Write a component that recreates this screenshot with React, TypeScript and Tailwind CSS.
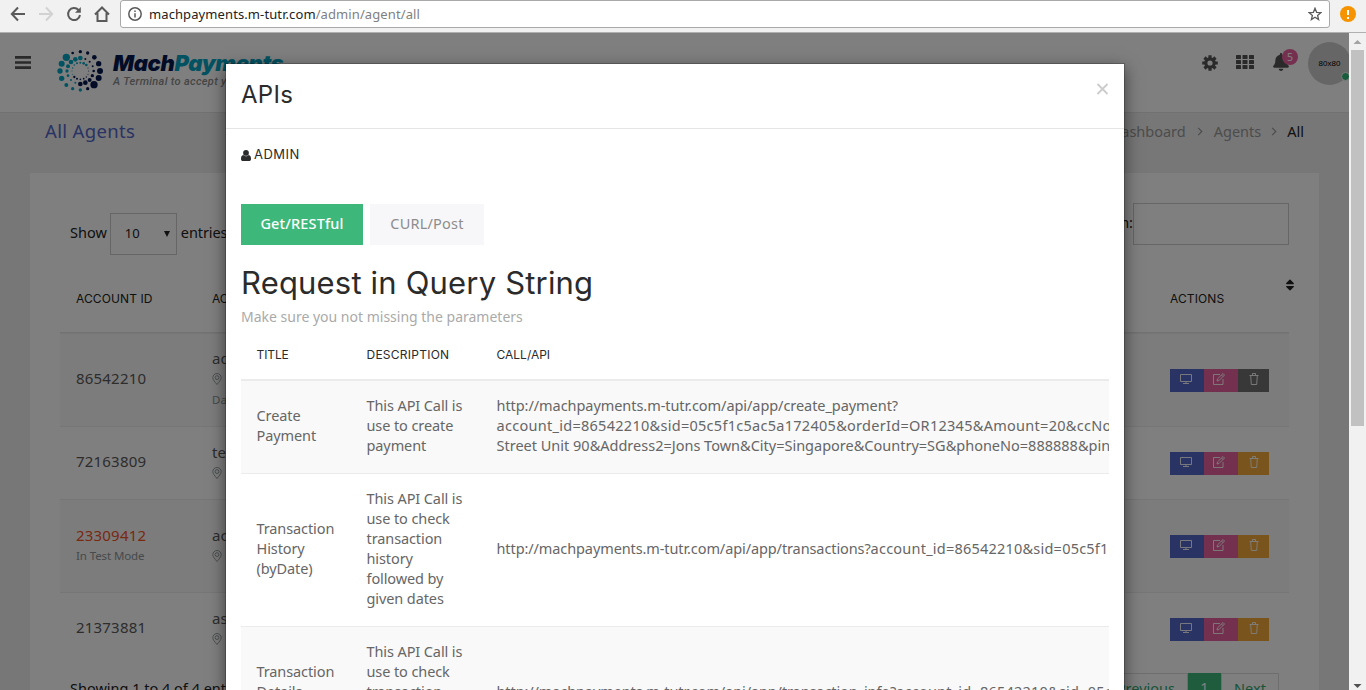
import React from "react";
import { FaBell, FaSort } from "react-icons/fa";

type Dot = [number, number, number, string];
const N = "#04194f";
const T = "#05a5c4";
const outer: Dot[] = [
  [85, 20, 5, N], [107, 24, 5, N], [127, 37, 7, N], [140, 56, 8, N], [144, 78, 9, N], [140, 99, 9, N], [126, 119, 11, N], [107, 131, 5, N],
  [85, 135, 5, T], [62, 131, 5, T], [43, 120, 6, T], [29, 100, 8, T], [24, 78, 8, T], [29, 56, 9, T], [43, 37, 11, T], [62, 24, 4, N],
];
const middle: Dot[] = [
  [85, 39, 7, T], [100, 42, 3, N], [113, 50, 3, N], [122, 64, 3, N], [125, 78, 4, N], [121, 92, 5, N], [113, 105, 6, N], [100, 113, 7, N],
  [85, 117, 7, N], [70, 113, 3, T], [57, 105, 3, T], [48, 92, 4, T], [45, 78, 5, T], [48, 64, 6, T], [57, 51, 7, T], [70, 43, 7, T],
];
const inner: Dot[] = [
  [85, 53, 3, T], [95, 55, 4, T], [103, 60, 4, T], [108, 69, 1.5, N], [110, 78, 1.5, N], [108, 88, 1.5, N], [103, 96, 2, N], [95, 101, 2.5, N],
  [85, 103, 2.5, N], [75, 101, 3, N], [67, 96, 3.5, N], [62, 88, 1.5, T], [60, 78, 1.5, T], [62, 69, 2, T], [67, 60, 2.5, T], [75, 55, 3, T],
];

function Logo() {
  return (
    <svg viewBox="0 0 180 150" className="h-[50px] w-[60px] shrink-0">
      {[...outer, ...middle, ...inner].map(([x, y, r, c], i) => (
        <circle key={i} cx={x} cy={y} r={r} fill={c} />
      ))}
    </svg>
  );
}

const Monitor = () => (
  <svg viewBox="0 0 12 12" className="size-3" fill="none" stroke="currentColor">
    <path d="M.5 1.5h11v7H.5zM6 8.500v2M3 10.500h6" />
  </svg>
);
const Edit = () => (
  <svg viewBox="0 0 12 12" className="size-3" fill="none" stroke="currentColor">
    <path d="M7 1.500H.5v10h9.500V6M4 8l.6-2.200L10 .5l1.500 1.500L6.200 7.400zM8.500 2l1.500 1.500" />
  </svg>
);
const Trash = () => (
  <svg viewBox="0 0 12 12" className="size-3" fill="none" stroke="currentColor">
    <path d="M1.500 2.500h9M4.500 2.500v-2h3v2M2.700 2.500l.6 9h5.400l.6-9" />
  </svg>
);
const Pin = () => (
  <svg viewBox="0 0 10 12" className="h-3 w-[10px] text-[#8d9498]" fill="none" stroke="currentColor" strokeWidth=".9">
    <path d="M5 11.500C3 9 .8 6.800.8 4.700a4.200 4.200 0 0 1 8.400 0C9.200 6.800 7 9 5 11.500z" />
    <circle cx="5" cy="4.600" r="1.900" />
  </svg>
);
const Chevron = () => (
  <svg viewBox="0 0 6 10" className="mt-[7px] h-[9px] w-1.5" fill="none" stroke="currentColor" strokeWidth="1.300">
    <path d="M1 1l4 4-4 4" />
  </svg>
);
const Gear = () => (
  <svg viewBox="0 0 16 16" className="mt-[22px] size-4" fill="none" stroke="currentColor">
    <circle cx="8" cy="8" r="4.200" strokeWidth="3.200" />
    <path d="M8 .2v3M8 12.800v3M.2 8h3M12.800 8h3M2.500 2.500l2 2M11.500 11.500l2 2M2.500 13.500l2-2M11.500 4.500l2-2" strokeWidth="3.200" />
  </svg>
);
const Bars = () => (
  <svg viewBox="0 0 16 13" className="mt-[23px] ml-[15px] h-[13px] w-4" fill="currentColor">
    <path d="M0 0h16v2.700H0zM0 5.200h16v2.600H0zM0 10.300h16V13H0z" />
  </svg>
);
const Grid = () => (
  <svg viewBox="0 0 18 14" className="mt-[22px] ml-[18px] h-[14px] w-[18px]" fill="currentColor">
    {[0, 6.5, 13].map((x) => [0, 5, 10].map((y) => <rect key={`${x}-${y}`} x={x} y={y} width="5" height="4" rx=".6" />))}
  </svg>
);
const Person = () => (
  <svg viewBox="0 0 10 11" className="h-[11px] w-[10px]" fill="currentColor">
    <circle cx="5" cy="2.900" r="2.900" />
    <path d="M2.300 5C.6 5.300 0 7 0 8.900 0 10.200.8 11 2 11h6c1.200 0 2-.8 2-2.100C10 7 9.400 5.300 7.700 5 6.200 6.800 3.800 6.800 2.300 5z" />
  </svg>
);

function BrowserBar() {
  return (
    <div className="flex h-[33px] shrink-0 items-start border-b border-[#b0b0b0] bg-[#f1f1f1] text-[#5a5a5a]">
      <svg viewBox="0 0 120 28" className="h-7 w-[120px] shrink-0" fill="none" stroke="currentColor" strokeWidth="2">
        <path d="M25 14H12.500M18 7.500 11.800 14l6.200 6.500" />
        <path d="M39 14h12.500M46 7.500l6.200 6.500-6.200 6.500" stroke="#d2d2d2" />
        <path d="M78.500 10A6 6 0 1 0 80 15" />
        <path d="M80.800 7v5.800H75z" fill="currentColor" stroke="none" />
        <path d="M95 14.500 102 7.500l7 7M97.500 13v8h9v-8" />
      </svg>
      <div className="flex h-7 w-[1210px] items-center rounded-[3px] border border-[#a9a9a9] bg-white pr-[7px] pl-[7px]">
        <svg viewBox="0 0 14 14" className="size-[14px]" fill="none" stroke="currentColor" strokeWidth="1.500">
          <circle cx="7" cy="7" r="6.200" />
          <path d="M7 6.200v4.300M7 3.500v1.500" />
        </svg>
        <span className="ml-[7px] font-['Noto_Sans',sans-serif] text-[13px] leading-5 tracking-[.1px] text-[#222]">
          machpayments.m-tutr.com<span className="text-[#808080]">/admin/agent/all</span>
        </span>
        <svg viewBox="0 0 14 14" className="ml-auto size-[14px]" fill="none" stroke="currentColor" strokeWidth="1.300">
          <path d="M7 1.300l1.600 4 4.300.3-3.300 2.800 1 4.200L7 10.300l-3.600 2.300 1-4.200L1.100 5.600l4.300-.3z" />
        </svg>
      </div>
      <div className="mt-1.5 ml-[10px] flex size-4 flex-col items-center justify-center gap-0.5 rounded-full bg-[#f59300]">
        <span className="h-[5px] w-0.5 bg-white" />
        <span className="h-0.5 w-0.5 bg-white" />
      </div>
    </div>
  );
}

function TopNav() {
  return (
    <header className="flex h-20 shrink-0 items-start border-b border-[#e2e2e2] bg-white text-[#555]">
      <Bars />
      <div className="mt-3 ml-[21px]">
        <Logo />
      </div>
      <div className="mt-[16px] ml-px">
        <div className="font-['Inter',sans-serif] text-[22px] leading-[28px] font-black tracking-[-.35px] text-[#04194f] italic">
          Mach<span className="text-[#05a5c4]">Payments</span>
        </div>
        <div className="-mt-[2px] font-['Roboto',sans-serif] text-[11px] leading-[14px] font-medium tracking-[.33px] whitespace-nowrap text-[#8c8c8c] italic">
          A Terminal to accept your payments
        </div>
      </div>
      <div className="-mr-0.5 ml-auto flex items-start">
        <Gear />
        <Grid />
        <div className="relative mt-5 ml-[18px]">
          <FaBell className="size-[18px]" />
          <span className="absolute -top-1 left-[10px] flex size-4 items-center justify-center rounded-full bg-[#ec609f] font-['Noto_Sans',sans-serif] text-[10.500px] leading-none text-white">5</span>
        </div>
        <div className="relative mt-[9px] ml-[18px] flex size-[43px] items-center justify-center rounded-full bg-[#ccc] font-['Liberation_Sans',sans-serif] text-[8px] text-black">
          80x80
          <span className="absolute top-[30px] left-[33px] size-[9px] rounded-full border border-white bg-[#2fb877]" />
        </div>
      </div>
    </header>
  );
}

type Agent = { id: string; name: string; test?: boolean; extra?: string; grey?: boolean; tall?: boolean };
const agents: Agent[] = [
  { id: "86542210", name: "admin", extra: "Dashboard", grey: true, tall: true },
  { id: "72163809", name: "test" },
  { id: "23309412", name: "acme", test: true, tall: true },
  { id: "21373881", name: "assist" },
];

function AgentRow({ a }: { a: Agent }) {
  return (
    <div className={a.tall ? "flex h-[93px] items-center border-t border-[#ededed] bg-[#f9f9f9] pl-4" : "flex h-[73px] items-center border-t border-[#ededed] pl-4"}>
      <div className={a.test ? "w-[136px] pb-0.5" : "w-[136px] pb-[5px]"}>
        <div className={a.test ? "text-[15px] leading-5 tracking-[.2px] text-[#f4511e]" : "text-[15px] leading-5 tracking-[.2px]"}>{a.id}</div>
        {a.test && <div className="pt-px text-[11.500px] leading-5 tracking-[-.1px] text-[#8d9498]">In Test Mode</div>}
      </div>
      <div className="w-[958px] pb-[3px] text-[15px] leading-5">
        {a.name}
        <div className="flex h-5 items-center pt-0.5">
          <Pin />
        </div>
        {a.extra && <div className="pt-0.5 text-[11.500px] leading-5 text-[#8d9498]">{a.extra}</div>}
      </div>
      <div className="flex h-[23px] text-white/90">
        <span className="flex w-[34px] justify-center bg-[#5267c8] pt-1 pr-[3px]"><Monitor /></span>
        <span className="flex w-[34px] justify-center bg-[#e8619f] pt-[4px] pr-[4px]"><Edit /></span>
        <span className={a.grey ? "flex w-[31px] justify-center bg-[#707070] pt-[4px]" : "flex w-[31px] justify-center bg-[#f2a83a] pt-[4px]"}><Trash /></span>
      </div>
    </div>
  );
}

function AgentsPage() {
  return (
    <main className="flex h-[577px] flex-col overflow-hidden bg-[#eeeeee]">
      <div className="flex h-[60px] shrink-0 justify-between pt-[7px] pr-[45px] pl-[45px]">
        <h1 className="font-['Noto_Sans',sans-serif] text-[18.500px] leading-[22px] tracking-[.35px] text-[#5267c8]">All Agents</h1>
        <div className="flex gap-[11px] text-[14.500px] leading-[22px] text-[#999]">
          <span>Dashboard</span>
          <Chevron />
          <span className="-mr-px">Agents</span>
          <Chevron />
          <span className="-ml-px text-[#222]">All</span>
        </div>
      </div>
      <section className="mx-[30px] h-[600px] shrink-0 bg-white px-[30px] pt-[30px]">
        <div className="flex h-[52px] items-start justify-between pl-[10px] text-[14.500px] text-[#222]">
          <div className="mt-[10px] flex h-[42px] items-center">
            <span className="pb-0.5">Show</span>
            <div className="mr-1 ml-[3px] flex h-[42px] w-[67px] items-center justify-between border border-[#ccc] pr-1.5 pl-[14px] text-[13px]">
              10
              <svg viewBox="0 0 6 6" className="size-1.5"><path d="M0 0h6L3 6z" fill="#222" /></svg>
            </div>
            <span className="pb-0.5 tracking-[-.1px]">entries</span>
          </div>
          <div className="flex h-[42px] items-center">
            <span className="pb-0.5">Search:</span>
            <span className="h-[42px] w-[156px] border border-[#ccc]" />
          </div>
        </div>
        <div className="flex h-[78px] items-center border-b border-[#e4e4e4] pt-[10px] pl-4 font-['Inter',sans-serif] text-[12px] text-[#222]">
          <span className="w-[136px] shrink-0 tracking-[.1px]">ACCOUNT ID</span>
          <span className="w-[958px] shrink-0">ACCOUNT</span>
          <span className="w-[113px] shrink-0 tracking-[.1px]">ACTIONS</span>
          <FaSort className="-mt-[27px] size-[14px] shrink-0" />
        </div>
        {agents.map((a) => <AgentRow key={a.id} a={a} />)}
        <div className="flex justify-between pr-[10px] pl-[10px] text-[14.500px] text-[#222]">
          <span className="mt-[13px]">Showing 1 to 4 of 4 entries</span>
          <div className="mt-2 flex h-8 text-[#2fa870]">
            <span className="border border-[#ddd] px-3 pt-1">Previous</span>
            <span className="w-[33px] bg-[#3db87a] pt-1 text-center text-white">1</span>
            <span className="w-[58px] border border-[#ddd] pt-1 text-center">Next</span>
          </div>
        </div>
      </section>
    </main>
  );
}

const cell = "border-t border-[#ebebeb] pr-4 pl-[15.500px] pt-[14px] pb-[18px] align-middle";

function ApiModal() {
  return (
    <div className="absolute top-[30px] left-[225px] flex h-[700px] w-[900px] flex-col border border-black/20 bg-white bg-clip-padding text-[#666] shadow-[0_5px_15px_rgba(0,0,0,0.5)]">
      <div className="flex h-[65px] shrink-0 justify-between border-b border-[#e5e5e5] pr-[15px] pl-[15px]">
        <h4 className="pt-[14px] font-['Inter',sans-serif] text-[24px] leading-[34px] tracking-[.3px] text-[#2b2b2b]">APIs</h4>
        <svg viewBox="0 0 12 12" className="mt-[19px] h-3 w-[13px] text-[#ccc]" stroke="currentColor" strokeWidth="1.900"><path d="M1 1l10 10M11 1L1 11" /></svg>
      </div>
      <div className="flex flex-col overflow-hidden px-[15px]">
        <div className="mt-[15px] flex h-[22px] items-center gap-[3px] font-['Inter',sans-serif] text-[13px] tracking-[.5px] text-[#2b2b2b]">
          <Person />
          ADMIN
        </div>
        <div className="mt-[38px] flex gap-[7px] text-[14.500px]">
          <span className="flex h-[41px] w-[122px] items-center justify-center bg-[#3db87a] pb-0.5 font-medium tracking-[.15px] text-white">Get/RESTful</span>
          <span className="flex h-[41px] w-[114px] items-center justify-center bg-[#f7f7f9] pb-0.5 tracking-[.2px] text-[#8d8d8d]">CURL/Post</span>
        </div>
        <h2 className="mt-5 font-['Inter',sans-serif] text-[31px] leading-9 tracking-[.18px] whitespace-nowrap text-[#2b2b2b]">Request in Query String</h2>
        <p className="mt-[5px] text-[14px] leading-[22px] whitespace-nowrap text-[#aaa]">Make sure you not missing the parameters</p>
        <div className="overflow-hidden">
          <table className="w-[1500px] table-fixed border-separate border-spacing-0 text-[14.500px] leading-5">
            <colgroup>
              <col className="w-[110px]" />
              <col className="w-[130px]" />
              <col />
            </colgroup>
            <thead>
              <tr className="h-[52px] text-left font-['Inter',sans-serif] text-[12px] text-[#2b2b2b]">
                <th className="border-b border-[#ebebeb] pr-4 pl-[15.500px] pt-0.5 font-normal tracking-[-.1px]">TITLE</th>
                <th className="border-b border-[#ebebeb] pr-4 pl-[15.500px] pt-0.5 font-normal tracking-[.25px]">DESCRIPTION</th>
                <th className="border-b border-[#ebebeb] pr-4 pl-[15.500px] pt-0.5 font-normal">CALL/API</th>
              </tr>
            </thead>
            <tbody className="tracking-[-.1px] whitespace-nowrap">
              <tr className="bg-[#f9f9f9]">
                <td className={cell}>Create<br />Payment</td>
                <td className={cell}>This API Call is<br />use to create<br />payment</td>
                <td className={cell}>
                  <span className="tracking-[-.06px]">http://machpayments.m-tutr.com/api/app/create_payment?</span><br />
                  <span className="tracking-[.28px]">account_id=86542210&amp;sid=05c5f1c5ac5a172405&amp;orderId=OR12345&amp;Amount=20&amp;ccNo=4111</span><br />
                  <span className="tracking-normal">Street Unit 90&amp;Address2=Jons Town&amp;City=Singapore&amp;Country=SG&amp;phoneNo=888888&amp;pin=1234</span>
                </td>
              </tr>
              <tr>
                <td className={cell}>Transaction<br />History<br />(byDate)</td>
                <td className={cell}>This API Call is<br />use to check<br />transaction<br />history<br />followed by<br />given dates</td>
                <td className={cell}>http://machpayments.m-tutr.com/api/app/transactions?<span className="tracking-[.22px]">account_id=86542210&amp;sid=05c5f1c5ac5a172405</span></td>
              </tr>
              <tr className="bg-[#f9f9f9]">
                <td className={cell}>Transaction<br />Details<br />(byID)</td>
                <td className={cell}>This API Call is<br />use to check<br />transaction<br />details<br />by ID</td>
                <td className={cell}>http://machpayments.m-tutr.com/api/app/transaction_info?<span className="tracking-[.22px]">account_id=86542210&amp;sid=05c5f1c5ac5a172405</span></td>
              </tr>
            </tbody>
          </table>
        </div>
      </div>
    </div>
  );
}

function Scrollbar() {
  return (
    <div className="flex w-[17px] shrink-0 flex-col items-center bg-[#f1f1f1]">
      <svg viewBox="0 0 17 17" className="size-[17px]"><path d="M4.500 11h8L8.500 7z" fill="#a3a3a3" /></svg>
      <div className="h-[376px] w-[13px] bg-[#c1c1c1]" />
      <svg viewBox="0 0 17 17" className="mt-auto size-[17px]"><path d="M4.500 11h8l-4 4z" fill="#505050" /></svg>
    </div>
  );
}

export default function App() {
  return (
    <div className="flex h-[690px] w-[1366px] flex-col overflow-hidden font-['Noto_Sans',sans-serif] text-[#5a5a5a]">
      <BrowserBar />
      <div className="flex h-[657px]">
        <div className="relative w-[1349px] overflow-hidden">
          <TopNav />
          <AgentsPage />
          <div className="absolute inset-0 bg-black/50" />
          <ApiModal />
        </div>
        <Scrollbar />
      </div>
    </div>
  );
}
